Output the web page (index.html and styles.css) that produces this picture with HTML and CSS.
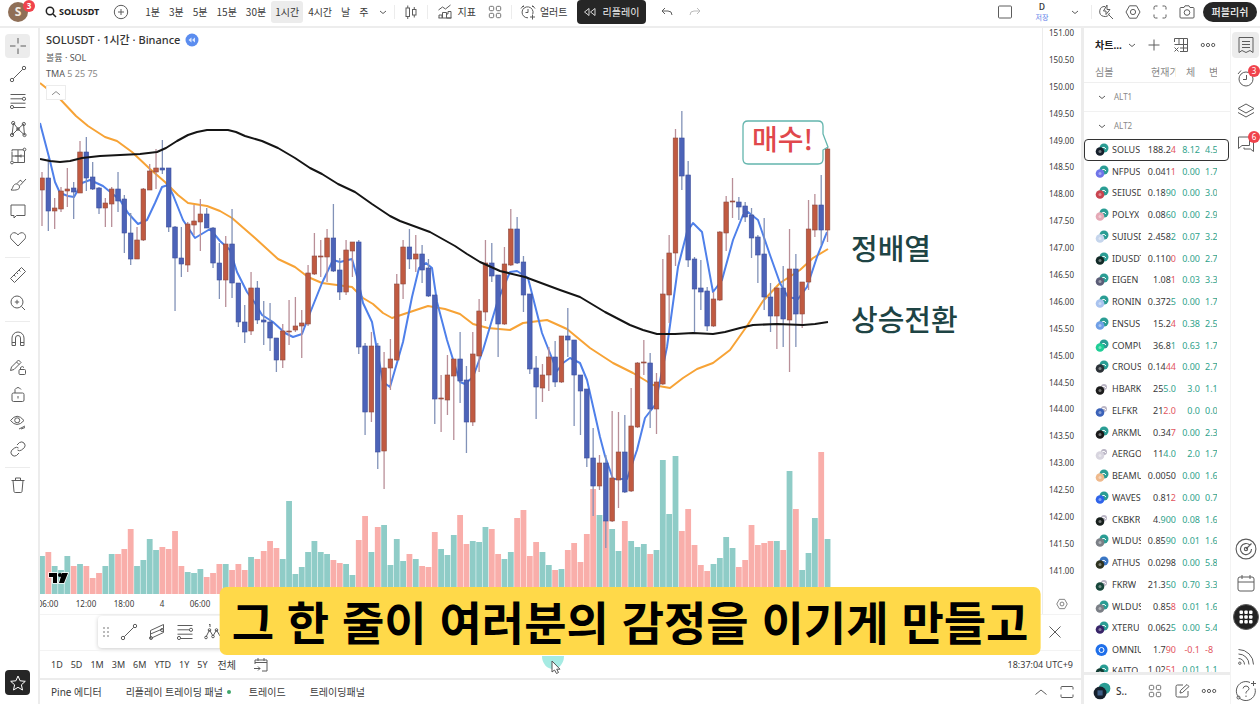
FILE: index.html
```html
<!DOCTYPE html>
<html lang="ko">
<head>
<meta charset="utf-8">
<title>SOLUSDT · 1시간 · Binance</title>
<link rel="stylesheet" href="styles.css">
</head>
<body>
<svg class="sprite" aria-hidden="true">
  <symbol id="chev" viewBox="0 0 10 10"><path d="M2 4l3 2.5L8 4"/></symbol>
  <symbol id="chev-up" viewBox="0 0 14 14"><path d="M1.500 9.500L7 5l5.500 4.500"/></symbol>
  <symbol id="search" viewBox="0 0 12 12"><circle cx="5" cy="5" r="3.700"/><path d="M8 8l3 3"/></symbol>
  <symbol id="plus-circle" viewBox="0 0 16 16"><circle cx="8" cy="8" r="6.700"/><path d="M8 5v6M5 8h6"/></symbol>
  <symbol id="candles" viewBox="0 0 14 16"><rect x="2" y="4" width="3.500" height="8.500"/><path d="M3.750 1.500V4M3.750 12.500V15M10.250 3v2.500M10.250 11v2.500"/><rect x="8.500" y="5.500" width="3.500" height="5.500"/></symbol>
  <symbol id="indicator" viewBox="0 0 16 16"><path d="M1.500 6l4-3 3 2 5-4M2 14v-3h3v3M5.500 14V8.500h4V14M9.500 14v-4h1.500V7.500h3V14zM1.500 14h13"/></symbol>
  <symbol id="grid4" viewBox="0 0 16 16"><rect x="1.500" y="1.500" width="5" height="5" rx="1.500"/><rect x="9.500" y="1.500" width="5" height="5" rx="1.500"/><rect x="1.500" y="9.500" width="5" height="5" rx="1.500"/><rect x="9.500" y="9.500" width="5" height="5" rx="1.500"/></symbol>
  <symbol id="alarm-plus" viewBox="0 0 16 16"><path d="M12.800 10A5.500 5.500 0 1 0 8 13.800M8 5v3.500H5.500M1 4.500L3.500 1.500M12.500 1.500L15 4.500M2 2.500h2M12 2.500h2M12.500 10.500v5M10 13h5"/></symbol>
  <symbol id="rewind" viewBox="0 0 14 12"><path d="M6 2.500v7L1.500 6zM12 2.500v7L7.500 6z"/></symbol>
  <symbol id="undo" viewBox="0 0 14 12"><path d="M5 2L2 5l3 3M2 5h6q4 0 4 4"/></symbol>
  <symbol id="redo" viewBox="0 0 14 12"><path d="M9 2l3 3-3 3M12 5H6Q2 5 2 9"/></symbol>
  <symbol id="square" viewBox="0 0 16 16"><rect x="1.500" y="2" width="13" height="12" rx="1"/></symbol>
  <symbol id="quick" viewBox="0 0 16 16"><path d="M7 2.500A5 5 0 1 0 11.500 9M10.500 10.500L15 15M9 1L5.500 7H8v3.500L12 5.500H9z"/></symbol>
  <symbol id="hex" viewBox="0 0 16 16"><path d="M4.500 1.800h7L15 8l-3.500 6.200h-7L1 8z"/><circle cx="8" cy="8" r="2.600"/></symbol>
  <symbol id="full" viewBox="0 0 16 16"><path d="M2 5.500V3.500q0-1.500 1.500-1.500h2M10.500 2h2Q14 2 14 3.500v2M14 10.500v2q0 1.500-1.500 1.500h-2M5.500 14h-2Q2 14 2 12.500v-2"/></symbol>
  <symbol id="maximize" viewBox="0 0 14 14"><path d="M1 4.500V2.500q0-1 1-1h10q1 0 1 1v2M1 9.500v2q0 1 1 1h10q1 0 1-1v-2"/></symbol>
  <symbol id="camera" viewBox="0 0 16 16"><path d="M2 3.500h3L6 1.800h4l1 1.700h3q1 0 1 1V13q0 1-1 1H2q-1 0-1-1V4.500q0-1 1-1z"/><circle cx="8" cy="8.500" r="2.800"/></symbol>
  <symbol id="cross" viewBox="0 0 18 18"><path d="M9 1v5.500M9 11.500V17M1 9h5.500M11.500 9H17"/></symbol>
  <symbol id="trend" viewBox="0 0 18 18"><circle cx="3" cy="15" r="1.700"/><circle cx="15" cy="3" r="1.700"/><path d="M4.300 13.700L13.700 4.300"/></symbol>
  <symbol id="fib" viewBox="0 0 18 18"><path d="M1.500 2.500h15M1.500 6.800h12M1.500 11.200h15M4.500 15.500h12"/><circle cx="15" cy="6.800" r="1.600"/><circle cx="3" cy="15" r="1.600"/></symbol>
  <symbol id="pattern" viewBox="0 0 18 18"><path d="M3 15L4.500 3l4.500 6 5.500-5L15.500 15 9 9z"/><circle cx="4.200" cy="3" r="1.600"/><circle cx="14.800" cy="4" r="1.600"/><circle cx="3" cy="15" r="1.600"/><circle cx="15.500" cy="15" r="1.600"/><circle cx="9" cy="9" r="1.300"/></symbol>
  <symbol id="forecast" viewBox="0 0 18 18"><path d="M3 4.500V2.800h11.500M15.500 4v11.500H4.500M3 5v8.500M3 9h12.500M9 3v12.500M6 9h6"/><circle cx="15.500" cy="2.500" r="1.400"/><circle cx="3" cy="15.500" r="1.400"/><path d="M12 7.500v3"/></symbol>
  <symbol id="brush" viewBox="0 0 18 18"><path d="M2 15c2-1.500 1.500-4 3.500-5.500s5 0 5 2.500-3 3.500-8.500 3zM8 8.500l3.500-3.500M11 10.500l6-6.500M11 5l2.500 2"/></symbol>
  <symbol id="note" viewBox="0 0 18 18"><path d="M2 3h14v10.500H7.500L5 16v-2.500H2z"/></symbol>
  <symbol id="heart" viewBox="0 0 18 18"><path d="M9 16L2.200 9C-.5 5.500 4.500-.5 9 4.800 13.500-.5 18.500 5.500 15.800 9z"/></symbol>
  <symbol id="ruler" viewBox="0 0 18 18"><path d="M1.500 12.500l11-11 4 4-11 11zM10 4l1.500 1.500M7.500 6.500L9 8M5 9l1.500 1.500"/></symbol>
  <symbol id="zoomin" viewBox="0 0 18 18"><circle cx="8" cy="8" r="6"/><path d="M12.500 12.500L16 16M8 5.800v4.400M5.800 8h4.400"/></symbol>
  <symbol id="magnet" viewBox="0 0 18 18"><path d="M3 15.500V8a6 6 0 0 1 12 0v7.500h-3.500V8a2.500 2.500 0 0 0-5 0v7.500zM3 12.500h3.500M11.500 12.500H15"/></symbol>
  <symbol id="pen-lock" viewBox="0 0 18 18"><path d="M1.500 12.500l1-3.500L9.500 2l2.500 2.500-7 7zM7.500 4L10 6.500"/><rect x="10" y="11.500" width="6.500" height="5" rx="1"/><path d="M11.500 11.500V9.500q1.800-2 3.500 0"/></symbol>
  <symbol id="lock" viewBox="0 0 18 18"><rect x="3" y="8" width="12" height="8.500" rx="1.500"/><path d="M6 8V4.500Q9 .5 12 4.500M9 11v2.500"/></symbol>
  <symbol id="eye" viewBox="0 0 18 18"><path d="M1.500 7.500Q8-1 15 7.500 8 15.500 1.500 7.500z"/><circle cx="8.200" cy="7.300" r="2.500"/><path d="M10 16l6-3M12 16l4-1.500"/></symbol>
  <symbol id="link" viewBox="0 0 18 18"><path d="M8 5l2.500-2.500q2.500-1.500 4.500.5t.5 4.500L12.500 10q-2 1.500-4 0M10 13l-2.500 2.500q-2.500 1.500-4.500-.5t-.5-4.500L5.500 8q2-1.500 4 0"/></symbol>
  <symbol id="trash" viewBox="0 0 18 18"><path d="M2.500 4.500h13M6.500 4V2h5v2M4 4.500l1 11q.2 1 1.200 1h5.600q1 0 1.200-1l1-11"/></symbol>
  <symbol id="star" viewBox="0 0 18 18"><path d="M9 2l2.100 4.800 5.200.5-3.900 3.500 1.100 5.200L9 13.300 4.500 16l1.100-5.200L1.700 7.300l5.200-.5z"/></symbol>
  <symbol id="channel" viewBox="0 0 18 18"><path d="M2.500 7.500L15.500 1.500v4L2.500 11zM2.500 11v4.500l13-6v-4"/><circle cx="3" cy="15" r="1.500"/><circle cx="14" cy="7" r="1.500"/></symbol>
  <symbol id="wave" viewBox="0 0 18 18"><path d="M2 14l3.500-7L9 13l3.500-6L16 13M6 1v3M5 1.500h1"/><circle cx="2" cy="14.500" r="1.300"/><circle cx="5.500" cy="7" r="1.300"/><circle cx="9" cy="13.500" r="1.300"/><circle cx="12.500" cy="7" r="1.300"/></symbol>
  <symbol id="goto" viewBox="0 0 16 16"><path d="M2 7V3h12v11H9M2 5.500h12M5 1v3M11 1v3M1 11.500h6M5 9.500l2 2-2 2"/></symbol>
  <symbol id="close" viewBox="0 0 14 14"><path d="M1.500 1.500l11 11M12.500 1.500l-11 11"/></symbol>
  <symbol id="plus" viewBox="0 0 14 14"><path d="M7 1.500v11M1.500 7h11"/></symbol>
  <symbol id="sheet" viewBox="0 0 16 16"><path d="M1.500 5V1.500h13v13H7M1.500 7.500h13M6 1.500v6M10.500 1.500v13M7 11h7.500M1.500 10.500l4 4M5.500 10.500l-4 4"/></symbol>
  <symbol id="dots" viewBox="0 0 16 16"><circle cx="2.800" cy="8" r="1.600"/><circle cx="8" cy="8" r="1.600"/><circle cx="13.200" cy="8" r="1.600"/></symbol>
  <symbol id="bookmark" viewBox="0 0 18 18"><path d="M2 1.500h14V16.500l-3-2-4 2-4-2-3 2zM5 5.500h8M5 8.500h8M5 11.500h8"/></symbol>
  <symbol id="alarm" viewBox="0 0 18 18"><circle cx="9" cy="10" r="7"/><path d="M9.500 6v4.500H6M1 5l3-3.500"/></symbol>
  <symbol id="layers" viewBox="0 0 18 18"><path d="M9 2l8 4.500L9 11 1 6.500zM1 10.500L9 15l8-4.500"/></symbol>
  <symbol id="chat" viewBox="0 0 18 18"><path d="M1.500 2h11v8.500H5L1.500 13.500zM14.500 6h2v10.500L13.500 14H7v-1.500"/></symbol>
  <symbol id="target" viewBox="0 0 20 20"><circle cx="10" cy="10" r="9"/><path d="M13.500 6.500a5 5 0 1 0 1.500 3.500M10 10l5-5"/><circle cx="10" cy="10" r="1.500"/></symbol>
  <symbol id="calendar" viewBox="0 0 18 18"><rect x="1" y="3" width="16" height="14" rx="2"/><path d="M1 8h16M5 1v4M13 1v4"/></symbol>
  <symbol id="apps" viewBox="0 0 26 26"><circle cx="13" cy="13" r="12.500" fill="#222"/><g fill="#fff" stroke="none"><rect x="6.500" y="6.500" width="3.500" height="3.500" rx="1"/><rect x="11.300" y="6.500" width="3.500" height="3.500" rx="1"/><rect x="16" y="6.500" width="3.500" height="3.500" rx="1"/><rect x="6.500" y="11.300" width="3.500" height="3.500" rx="1"/><rect x="11.300" y="11.300" width="3.500" height="3.500" rx="1"/><rect x="16" y="11.300" width="3.500" height="3.500" rx="1"/><rect x="6.500" y="16" width="3.500" height="3.500" rx="1"/><rect x="11.300" y="16" width="3.500" height="3.500" rx="1"/><rect x="16" y="16" width="3.500" height="3.500" rx="1"/></g></symbol>
  <symbol id="rss" viewBox="0 0 18 18"><path d="M1.500 1.500a15 15 0 0 1 15 15M1.500 6a10.500 10.500 0 0 1 10.500 10.500M1.500 10.500a6 6 0 0 1 6 6"/><circle cx="2.800" cy="15.200" r="1.200"/></symbol>
  <symbol id="help" viewBox="0 0 22 22"><path d="M15 2.500a9.500 9.500 0 1 0 5 6M8 8.500q.5-2.500 3-2.500t3 2.500q0 1.500-1.800 2.500T11 13.500M11 15.500v1.500M18.500 1v5M16 3.500h5"/><circle cx="3.500" cy="17.500" r="1.500"/></symbol>
  <symbol id="edit" viewBox="0 0 16 16"><path d="M9 2H3.500Q2 2 2 3.500v9Q2 14 3.500 14h9q1.500 0 1.500-1.500V8M6 10l.5-2.500 6.500-6 2 2-6.500 6z"/></symbol>
</svg>

<header class="topbar">
  <button class="avatar" aria-label="프로필">S<span class="badge avatar-badge">3</span></button>
  <button class="symbol"><svg class="i12 bold"><use href="#search"/></svg>SOLUSDT</button>
  <button class="icon add-symbol" aria-label="심볼 추가"><svg class="i16"><use href="#plus-circle"/></svg></button>
  <nav class="intervals">
    <button>1분</button><button>3분</button><button>5분</button><button>15분</button><button>30분</button><button class="on">1시간</button><button>4시간</button><button>날</button><button>주</button>
  </nav>
  <button class="icon iv-more" aria-label="더 보기"><svg class="i10"><use href="#chev"/></svg></button>
  <span class="vsep"></span>
  <button class="icon w32" aria-label="차트 종류"><svg class="i14t"><use href="#candles"/></svg></button>
  <span class="vsep"></span>
  <button class="labelled"><svg class="i16"><use href="#indicator"/></svg>지표</button>
  <button class="icon w32" aria-label="템플릿"><svg class="i14"><use href="#grid4"/></svg></button>
  <span class="vsep"></span>
  <button class="labelled alert"><svg class="i16"><use href="#alarm-plus"/></svg>얼러트</button>
  <button class="replay"><svg class="i14s"><use href="#rewind"/></svg>리플레이</button>
  <button class="icon undo" aria-label="실행 취소"><svg class="i14s"><use href="#undo"/></svg></button>
  <button class="icon faded" aria-label="다시 실행"><svg class="i14s"><use href="#redo"/></svg></button>
  <div class="top-right">
    <button class="icon w32" aria-label="레이아웃"><svg class="i16"><use href="#square"/></svg></button>
    <button class="save"><b>D</b><small>저장</small></button>
    <button class="icon save-more" aria-label="레이아웃 메뉴"><svg class="i10"><use href="#chev"/></svg></button>
    <span class="vsep"></span>
    <button class="icon w27" aria-label="빠른 검색"><svg class="i16"><use href="#quick"/></svg></button>
    <button class="icon w27" aria-label="설정"><svg class="i16"><use href="#hex"/></svg></button>
    <button class="icon w27" aria-label="전체 화면"><svg class="i16"><use href="#full"/></svg></button>
    <button class="icon w27" aria-label="스냅샷"><svg class="i16"><use href="#camera"/></svg></button>
    <button class="publish">퍼블리쉬</button>
  </div>
</header>

<div class="workspace">
  <aside class="tools">
    <div class="tool-group long">
      <button class="on" aria-label="십자선"><svg><use href="#cross"/></svg></button>
      <button aria-label="추세선"><svg><use href="#trend"/></svg></button>
      <button aria-label="피보나치"><svg><use href="#fib"/></svg></button>
      <button aria-label="패턴"><svg><use href="#pattern"/></svg></button>
      <button aria-label="예측"><svg><use href="#forecast"/></svg></button>
      <button aria-label="브러시"><svg><use href="#brush"/></svg></button>
      <button aria-label="텍스트"><svg><use href="#note"/></svg></button>
      <button aria-label="아이콘"><svg><use href="#heart"/></svg></button>
    </div>
    <div class="tool-group short">
      <button aria-label="자"><svg><use href="#ruler"/></svg></button>
      <button aria-label="확대"><svg><use href="#zoomin"/></svg></button>
    </div>
    <div class="tool-group mid">
      <button aria-label="자석"><svg><use href="#magnet"/></svg></button>
      <button aria-label="그리기 유지"><svg><use href="#pen-lock"/></svg></button>
      <button aria-label="잠금"><svg><use href="#lock"/></svg></button>
      <button aria-label="숨기기"><svg><use href="#eye"/></svg></button>
      <button aria-label="동기화"><svg><use href="#link"/></svg></button>
    </div>
    <div class="tool-group">
      <button aria-label="삭제"><svg><use href="#trash"/></svg></button>
    </div>
    <button class="fav" aria-label="즐겨찾기"><svg><use href="#star"/></svg></button>
  </aside>

  <main class="center">
    <section class="chart-row">
      <div class="stage">
        <svg class="plot" id="plot" viewBox="40 28 1002 566" preserveAspectRatio="xMinYMin meet" role="img" aria-label="SOLUSDT 캔들 차트"></svg>
        <div class="legend">
          <h1>SOLUSDT · 1시간 · Binance <svg class="replay-dot" viewBox="0 0 14 14"><circle cx="7" cy="7" r="6.500" fill="#5b8def"/><path d="M6.500 4.500v5L3.500 7zM10 4.500v5L7 7z" fill="#dce8ff"/></svg></h1>
          <p>볼륨 · SOL</p>
          <p>TMA <span>5 25 75</span></p>
          <button class="fold" aria-label="접기"><svg class="i10"><use href="#chev-up"/></svg></button>
        </div>
      </div>
      <ol class="prices" id="prices"></ol>
    </section>

    <section class="time-axis">
      <ol class="times"><li>06:00</li><li>12:00</li><li>18:00</li><li>4</li><li>06:00</li></ol>
      <button class="icon axis-gear" aria-label="축 설정"><svg class="i12"><use href="#hex"/></svg></button>
    </section>

    <section class="draw-row">
      <div class="favorites">
        <span class="grip"></span>
        <button aria-label="추세선"><svg><use href="#trend"/></svg></button>
        <button aria-label="채널"><svg><use href="#channel"/></svg></button>
        <button aria-label="피보나치"><svg><use href="#fib"/></svg></button>
        <button aria-label="엘리엇 파동"><svg><use href="#wave"/></svg></button>
      </div>
      <button class="icon close" aria-label="닫기"><svg class="i14"><use href="#close"/></svg></button>
    </section>

    <section class="range-row">
      <button>1D</button><button>5D</button><button>1M</button><button>3M</button><button>6M</button><button>YTD</button><button>1Y</button><button>5Y</button><button class="kr">전체</button>
      <button class="icon goto" aria-label="날짜로 이동"><svg class="i16"><use href="#goto"/></svg></button>
      <time>18:37:04 UTC+9</time>
    </section>

    <footer class="tabs">
      <button>Pine 에디터</button><button>리플레이 트레이딩 패널<i></i></button><button>트레이드</button><button>트레이딩패널</button>
      <div class="tab-right">
        <button class="icon" aria-label="펼치기"><svg class="i14"><use href="#chev-up"/></svg></button>
        <button class="icon" aria-label="최대화"><svg class="i14"><use href="#maximize"/></svg></button>
      </div>
    </footer>
  </main>

  <aside class="watch">
    <header class="watch-head">
      <button class="list-name">차트... <svg class="i10"><use href="#chev"/></svg></button>
      <button class="icon w27" aria-label="추가"><svg class="i14"><use href="#plus"/></svg></button>
      <button class="icon w27" aria-label="표 보기"><svg class="i16"><use href="#sheet"/></svg></button>
      <button class="icon w27" aria-label="메뉴"><svg class="i16"><use href="#dots"/></svg></button>
    </header>
    <table class="list">
      <thead><tr><th>심볼</th><th>현재가</th><th>체</th><th>변</th></tr></thead>
      <tbody class="groups">
        <tr><td><svg class="i10"><use href="#chev"/></svg>ALT1</td></tr>
        <tr><td><svg class="i10"><use href="#chev"/></svg>ALT2</td></tr>
      </tbody>
      <tbody class="rows" id="rows"></tbody>
    </table>
    <footer class="watch-foot">
      <span class="coin-name"><svg class="coin big" viewBox="0 0 14 14"><circle cx="9" cy="5" r="4.500" fill="#2a9d94"/><circle cx="5.500" cy="8.500" r="5" fill="#16202c"/><rect x="3.500" y="6.500" width="4" height="4" fill="#3f5f86"/></svg>S..</span>
      <button class="icon w27" aria-label="격자"><svg class="i14"><use href="#grid4"/></svg></button>
      <button class="icon w27" aria-label="메모"><svg class="i16"><use href="#edit"/></svg></button>
      <button class="icon w27" aria-label="메뉴"><svg class="i16"><use href="#dots"/></svg></button>
    </footer>
  </aside>

  <aside class="rail">
    <button class="on" aria-label="관심 목록"><svg><use href="#bookmark"/></svg></button>
    <button aria-label="얼러트"><svg><use href="#alarm"/></svg><span class="badge">3</span></button>
    <button aria-label="오브젝트 트리"><svg><use href="#layers"/></svg></button>
    <button aria-label="채팅"><svg><use href="#chat"/></svg><span class="badge">6</span></button>
    <div class="rail-bottom">
      <button aria-label="스크리너"><svg class="i22"><use href="#target"/></svg></button>
      <button aria-label="캘린더"><svg><use href="#calendar"/></svg></button>
      <button class="apps" aria-label="앱"><svg class="i26"><use href="#apps"/></svg></button>
      <button aria-label="뉴스"><svg><use href="#rss"/></svg></button>
      <button aria-label="도움말"><svg class="i22"><use href="#help"/></svg></button>
    </div>
  </aside>
</div>

<div class="pointer"><svg viewBox="0 0 22 18"><path d="M0 0h22a11 13 0 0 1-22 0z" fill="#a6ebe3"/><path d="M10 5v11l2.500-2 2 3.500 2-1-1.800-3.300H18z" fill="#fff" stroke="#555"/></svg></div>
<p class="caption">그 한 줄이 여러분의 감정을 이기게 만들고</p>
<script src="chart.js"></script>
</body>
</html>
```

FILE: styles.css
```css
* { box-sizing: border-box; }
body {
  margin: 0;
  height: 100vh;
  display: flex;
  flex-direction: column;
  overflow: hidden;
  position: relative;
  background: #fff;
  color: #3a3a3a;
  font: 10px/14px "Noto Sans", "Noto Sans CJK KR", sans-serif;
}
button { font: inherit; color: inherit; background: none; border: 0; padding: 0; margin: 0; display: flex; align-items: center; justify-content: center; flex: none; white-space: nowrap; }
ol { list-style: none; margin: 0; padding: 0; }
p, h1 { margin: 0; }
svg { fill: none; stroke: #5c5c5c; stroke-width: 1; flex: none; display: block; }
.sprite { position: absolute; width: 0; height: 0; }
.i10 { width: 10px; height: 10px; }
.i12 { width: 12px; height: 12px; }
.i14 { width: 14px; height: 14px; }
.i14s { width: 14px; height: 12px; }
.i14t { width: 14px; height: 16px; }
.i16 { width: 16px; height: 16px; }
.bold { stroke: #222; stroke-width: 1.5; }
.w27 { width: 27px; }
.w32 { width: 32px; }
.vsep { width: 1px; height: 14px; background: #ececec; flex: none; }
.badge {
  position: absolute; top: 0; right: -1px;
  width: 12px; height: 12px; border-radius: 6px;
  background: #f0434c; color: #fff; font-size: 8px; line-height: 12px; text-align: center;
}

/* top bar */
.topbar { display: flex; align-items: center; height: 28px; padding-bottom: 3px; border-bottom: 2px solid #ededed; flex: none; font-family: "Noto Sans CJK KR", sans-serif; }
.avatar { position: relative; width: 20px; height: 20px; margin-left: 8px; border-radius: 10px; background: #8f6f57; color: #f4ebe2; font: bold 12px/20px "Noto Sans", sans-serif; }
.avatar-badge { top: -2px; right: -7px; }
.symbol { margin-left: 17px; gap: 2px; font: bold 9px/14px "Noto Sans", sans-serif; color: #222; }
.add-symbol { margin-left: 14px; width: 16px; }
.intervals { display: flex; gap: 1px; margin-left: 12px; }
.intervals button { height: 22px; padding: 0 4px; border-radius: 3px; }
.intervals .on { background: #ececec; }
.iv-more { width: 22px; }
.labelled { gap: 4px; padding-left: 9px; }
.labelled + .icon { margin-left: 3px; }
.alert { padding-left: 8px; }
.replay { align-self: flex-start; height: 24px; width: 69px; margin-left: 9px; gap: 6px; border-radius: 4px; background: #262626; color: #f0f0f0; }
.replay svg { stroke: #d8d8d8; }
.undo { width: 42px; }
.faded svg { stroke: #bbb; }
.top-right { display: flex; align-items: center; margin-left: auto; padding-right: 3px; }
.save { flex-direction: column; width: 42px; line-height: 11px; }
.save b { font-size: 9px; font-weight: 500; }
.save small { font-size: 7px; color: #5b7be8; line-height: 11px; }
.save-more { width: 24px; }
.save-more + .vsep { margin: 0 0 0 4px; }
.publish { height: 20px; width: 54px; margin-left: 3px; border-radius: 10px; background: #262626; color: #f4f4f4; font-weight: 500; }

/* frame */
.workspace { flex: 1; min-height: 0; display: flex; }
.tools { width: 40px; flex: none; border-right: 2px solid #ececec; padding: 6px 8px 9px 5px; display: flex; flex-direction: column; }
.tool-group { display: flex; flex-direction: column; justify-content: space-between; }
.tool-group + .tool-group { border-top: 1px solid #ececec; margin-top: 6px; padding-top: 5px; }
.tool-group.long { height: 217px; }
.tool-group.short { height: 58px; }
.tool-group.mid { height: 140px; }
.tools button { width: 25px; height: 24px; border-radius: 4px; }
.tools svg, .favorites svg, .rail svg { width: 18px; height: 18px; }
.tools .on, .rail .on { background: #ececec; }
.tools .fav { margin-top: auto; height: 25px; background: #262626; }
.fav svg { stroke: #fff; }

.center { flex: 1; min-width: 0; display: flex; flex-direction: column; }
.chart-row { flex: 1; min-height: 0; display: flex; }
.stage { flex: 1; min-width: 0; position: relative; }
.plot { width: 100%; height: 100%; stroke: none; }
.plot text { font-family: "Noto Sans CJK KR", sans-serif; font-size: 29px; font-weight: 500; fill: #1e4444; }
.plot .buy { fill: #e0484c; font-size: 28px; }
.legend { position: absolute; top: 5px; left: 6px; color: #555; font-size: 9px; line-height: 16px; }
.legend h1 { display: flex; align-items: center; gap: 5px; font: 500 11px/14px "Noto Sans", "Noto Sans CJK KR", sans-serif; color: #333; margin-bottom: 3px; }
.legend span { color: #888; }
.replay-dot { width: 14px; height: 14px; stroke: none; }
.fold { width: 20px; height: 15px; margin-top: 3px; background: #fff; border: 1px solid #ececec; }
.prices { width: 39px; border-left: 1px solid #ececec; padding-bottom: 18px; display: flex; flex-direction: column; justify-content: space-between; flex: none; }
.prices li { padding-left: 6px; font-size: 8px; line-height: 10px; }
.time-axis { height: 20px; display: flex; align-items: center; flex: none; }
.times { flex: 1; display: flex; overflow: hidden; font-size: 8px; margin-left: -11px; clip-path: inset(0 0 0 11px); }
.times li { width: 38px; text-align: center; }
.axis-gear { width: 39px; border-left: 1px solid #ececec; height: 20px; }
.draw-row { height: 36px; display: flex; align-items: flex-start; justify-content: space-between; border-top: 1px solid #f3f3f3; flex: none; padding: 1px 19px 0 58px; }
.favorites { display: flex; align-items: center; height: 32px; width: 320px; padding-left: 4px; border-radius: 4px; box-shadow: 0 1px 4px #0003; }
.favorites button { width: 28px; }
.grip { width: 8px; height: 12px; margin-right: 5px; background: radial-gradient(circle, #bbb 1px, transparent 1px) 0 0 / 4px 4px; }
.close { height: 32px; }
.range-row { height: 28px; display: flex; align-items: center; gap: 8px; padding: 0 8px 0 11px; border-top: 1px solid #f3f3f3; font-size: 9px; flex: none; }
.range-row .kr { font-size: 10px; margin-left: 2px; }
.goto { margin-left: 9px; }
.range-row time { margin-left: auto; }
.tabs { height: 26px; display: flex; align-items: center; gap: 24px; padding: 0 7px 0 11px; border-top: 2px solid #ececec; flex: none; }
.tabs i { width: 4px; height: 4px; border-radius: 2px; background: #3fa66b; margin-left: 4px; }
.tabs button:nth-child(3) { margin-left: -6px; }
.tab-right { display: flex; gap: 12px; margin-left: auto; }
.tab-right button:nth-child(n) { margin: 0; }

/* watchlist */
.watch { width: 149px; border-left: 3px solid #ececec; display: flex; flex-direction: column; flex: none; }
.watch-head { height: 34px; display: flex; align-items: center; padding-left: 11px; flex: none; }
.list-name { width: 42px; justify-content: space-between; margin-right: 3px; color: #222; font-weight: 700; }
.list { flex: 1; min-height: 0; display: flex; flex-direction: column; border-collapse: collapse; font-size: 9px; line-height: 12px; }
.list td, .list th { padding: 0; overflow: hidden; white-space: nowrap; text-align: left; font-weight: 400; }
.list thead { display: block; height: 21px; border-bottom: 1px solid #efefef; flex: none; color: #888; font-size: 10px; line-height: 20px; }
.list thead tr, .rows tr { display: grid; grid-template-columns: 46px 30px 19px 12px; column-gap: 5px; padding-left: 11px; }
.list thead th:nth-child(2) { padding-left: 5px; }
.list thead th:nth-child(3) { padding-left: 5px; }
.list thead th:nth-child(4) { padding-left: 4px; }
.groups { display: block; flex: none; color: #888; font-size: 8px; }
.groups td { display: flex; align-items: center; gap: 7px; height: 28px; padding-left: 13px; }
.groups tr { display: block; }
.groups tr:first-child { border-bottom: 1px solid #f1f1f1; }
.groups tr:last-child { height: 27px; }
.rows { flex: 1; min-height: 0; display: flex; flex-direction: column; overflow: hidden; }
.rows tr { flex: 1 1 0; min-height: 0; align-items: center; margin-right: 1px; border-radius: 4px; }
.rows tr:first-child { outline: 1px solid #333; outline-offset: -1px; }
.rows tr:last-child { flex-grow: .5; align-items: start; overflow: hidden; }
.rows tr:last-child td { padding-top: 3px; }
.rows .name { display: flex; align-items: center; gap: 3px; }
.rows .name span { overflow: hidden; }
.rows .price { text-align: right; }
.rows .chg { text-align: right; }
.up { color: #2fa38c; }
.down { color: #e25560; }
.coin { width: 14px; height: 14px; stroke: none; }
.coin.big { width: 18px; height: 18px; }
.watch-foot { height: 32px; border-top: 3px solid #ececec; display: flex; align-items: center; padding: 3px 0 0 9px; flex: none; }
.coin-name { display: flex; align-items: center; gap: 5px; width: 48px; font-weight: 500; }

/* right rail */
.rail { width: 30px; border-left: 1px solid #f3f3f3; padding: 4px 1px 0; display: flex; flex-direction: column; align-items: center; gap: 7px; flex: none; }
.rail button { position: relative; width: 27px; height: 26px; border-radius: 4px; }
.rail .i22 { width: 22px; height: 22px; }
.rail .i26 { width: 26px; height: 26px; }
.rail-bottom { margin-top: auto; display: flex; flex-direction: column; gap: 8px; }
.rail-bottom .apps { margin-bottom: 6px; }

/* overlays */
.pointer { position: absolute; left: 542px; bottom: 30px; }
.pointer svg { width: 22px; height: 18px; stroke: none; }
.caption {
  position: absolute; left: 50%; bottom: 49px; transform: translateX(-50%);
  padding: 0 12px 2px; border-radius: 7px; background: #ffd949; color: #000; white-space: nowrap;
  font: 700 46px/66px "Noto Sans CJK KR", sans-serif;
}
```

FILE: chart.js
```js
// Candles: direction, high, open/close top, open/close bottom, low.
const candles = `r172,178,190,226 b158,178,211,231 r198,208,211,229 r187,191,209,212 r168,189,191,207 b182,188,192,219 r141,152,193,193 b137,152,178,191 b162,177,189,190 b187,188,208,214
r198,203,208,227 r187,189,204,227 b172,189,201,212 b195,199,233,253 b213,233,259,265 r227,240,259,259 r188,189,240,241 r164,171,190,190 r149,168,172,189 b140,168,170,174
b168,168,227,232 b226,227,258,311 b227,258,264,277 r222,224,265,272 r205,221,225,235 r199,214,222,251 b208,214,228,228 b227,228,263,268 b243,263,280,299 r236,244,280,307
b209,244,283,298 b283,283,322,327 b305,322,332,343 r272,288,331,335 b281,288,320,324 b301,320,322,345 b303,322,338,351 b338,338,360,372 r324,331,360,368 r300,331,332,345
r297,326,330,332 r310,323,326,358 r265,273,324,326 r233,256,274,275 r240,256,257,277 r229,238,257,282 b204,238,271,272 b258,270,292,300 r240,250,292,295 r242,242,251,277
b240,242,347,354 b343,346,412,435 r332,346,412,422 b343,346,452,469 r352,368,451,489 r339,359,368,390 r274,284,360,361 r240,247,284,299 b229,247,259,269 r235,254,259,272
b245,254,270,283 b259,268,296,297 b295,295,399,424 r375,398,399,432 r355,375,400,415 r359,359,376,440 b332,359,381,403 b366,380,422,453 r332,354,422,426 r299,311,356,372
r240,263,312,321 b243,263,276,282 b275,275,324,357 r247,264,324,325 r209,229,265,266 b217,229,263,264 b256,262,295,312 b294,294,369,374 b356,368,387,419 r364,375,388,402
r347,357,375,391 b341,357,382,387 r336,336,382,383 b308,336,340,357 b340,340,375,426 b375,375,391,435 b389,389,458,467 b428,458,486,516 r455,463,486,490 b455,463,521,548
r411,478,521,522 r412,452,480,508 b415,452,492,493 r388,426,491,492 r362,363,427,428 r340,362,363,375 b353,363,409,428 r373,382,409,434 r259,294,384,385 r235,253,295,323
r129,138,253,266 b111,138,176,190 b161,175,260,267 b257,259,289,332 b260,288,292,310 b287,291,326,331 r292,299,326,327 r231,232,300,301 r196,202,233,251 r178,201,202,218
b197,202,207,220 b202,206,217,222 b208,215,238,258 b235,237,255,283 b218,254,297,310 b283,297,316,332 r287,288,316,349 b266,288,319,347 r229,269,320,372 b254,269,314,347
r282,282,314,328 r200,229,282,290 r194,205,230,237 b175,205,230,245 r147,149,230,242`.split(/\s+/);

// Volume: direction and top of each bar.
const volume = `g556 r552 g566 g570 g556 r566 g564 r566 r578 r573 g566 g554 r554 r549 r529 g566 g560 g539 g550 r547 r549 r531 r566 g572 g573 g569 r577 r573 r564 g564
r570 r564 r570 g557 r559 r551 r541 r548 g559 g501 g574 g567 g552 g541 g552 g554 r560 r563 g564 g575 r540 r516 g552 r527 g525 g565 g539 g561 r554 g559
r566 r567 r532 g549 g555 g535 r515 r544 g541 g542 g527 r529 r554 g559 g552 r518 r510 r556 r542 g552 g565 r570 g569 r550 r543 r562 r534 r489 g515 r521
g529 g551 r521 g541 g547 g544 r554 g550 g460 g514 g456 r531 r509 r545 r565 r571 g564 g558 g537 g548 r567 r560 r525 r545 r543 r541 g541 r550 g471 r509
g570 g553 g518 r452 g539`.split(/\s+/);

const slow = "40,159 50,161 60,162 70,161 82,158 100,156 120,155 140,154 157,152 166,148 177,141 188,135 197,132 207,130 228,130 236,132 245,136 262,141 278,148 295,158 310,168 322,174 338,184 355,192 372,204 390,216 400,221 430,232 455,246 467,254 480,262 500,271 525,277 560,290 580,297 605,312 630,325 643,330 657,334 675,334 693,333 713,334 725,332 740,328 753,325 777,324 803,325 815,324 828,322";
const mid = "40,83 45,87 60,99 76,116 88,126 105,137 117,141 132,152 150,169 165,182 178,195 188,203 207,206 220,211 232,218 255,238 278,259 295,267 308,277 322,283 337,285 352,287 363,298 373,304 383,313 392,318 407,313 428,306 445,309 460,314 473,324 488,328 510,330 523,323 547,320 567,329 590,348 613,363 633,373 653,385 670,388 683,378 697,369 713,363 730,350 747,326 763,301 780,283 800,270 813,258 828,249";
const fast = "40,123 50,161 55,182 60,193 68,196 74,197 82,183 90,180 103,186 120,200 128,213 138,224 147,220 155,203 162,187 168,185 173,195 183,220 195,238 210,229 220,241 230,250 237,272 247,292 255,303 262,315 273,322 285,333 293,337 302,334 310,313 322,283 333,260 340,262 352,259 358,280 363,303 372,322 377,350 383,382 390,387 403,342 412,297 419,268 426,263 432,268 437,302 447,340 460,382 465,384 473,377 483,350 498,300 510,272 517,271 528,278 542,333 557,371 563,363 570,358 580,363 587,380 600,437 605,456 613,479 627,479 637,450 645,418 655,405 667,347 678,267 687,232 693,223 702,232 713,292 722,280 733,240 743,215 748,212 758,220 770,255 780,283 788,297 798,299 807,287 817,257 827,232";

const x = i => 42 + i * 6.335;
let out = "";
volume.forEach((v, i) => {
  const top = +v.slice(1);
  out += `<rect x="${x(i) - 2.9}" y="${top}" width="5.8" height="${594 - top}" fill="${v[0] === "g" ? "#8fccc7" : "#f9aeaa"}"/>`;
});
const line = (pts, color, w) => `<polyline points="${pts}" fill="none" stroke="${color}" stroke-width="${w}" stroke-linejoin="round"/>`;
out += line(mid, "#f7a336", 2) + line(fast, "#4f80ea", 2);
candles.forEach((c, i) => {
  const [hi, top, bottom, lo] = c.slice(1).split(",").map(Number);
  const red = c[0] === "r";
  out += `<path d="M${x(i)} ${hi}V${lo}" stroke="${red ? "#b98f98" : "#8292b8"}" stroke-width="1.3"/>`;
  out += `<rect x="${x(i) - 2.3}" y="${top}" width="4.6" height="${Math.max(1, bottom - top)}" fill="${red ? "#c05a41" : "#4c63b8"}" stroke="${red ? "#8d4a40" : "#3d4f9c"}" stroke-width=".6"/>`;
});
out += line(slow, "#151515", 2);
out += `<path d="M748 121H818Q823 121 823 126V134L828 147L823 150V159Q823 164 818 164H748Q743 164 743 159V126Q743 121 748 121Z" fill="#fff" stroke="#63b5ad" stroke-width="1.3"/>
<text class="buy" x="752" y="150">매수!</text><text x="851" y="260">정배열</text><text x="851" y="331">상승전환</text>
<path d="M49 573h8v10h-4v-6h-4zM62 573h6l-4 10h-5z" fill="#000" stroke="#fff" stroke-width="1.5" paint-order="stroke"/><circle cx="60" cy="575" r="2" fill="#000"/>`;
document.getElementById("plot").innerHTML = out;

let prices = "";
for (let p = 151; p >= 141; p -= 0.5) prices += `<li>${p.toFixed(2)}</li>`;
document.getElementById("prices").innerHTML = prices;

// name, steady digits, changed digits, direction, change, percent, coin colour, exchange colour
const T = "#2a9d94", K = "#b9b4c4";
const list = [
  ["SOLUS", "188.2", "4", "down", "8.12", "4.5", "#16202c", T],
  ["NFPUS", "0.041", "1", "down", "0.00", "1.7", "#6f74e8", T],
  ["SEIUSD", "0.18", "90", "up", "0.00", "3.0", "#c9444f", T],
  ["POLYX", "0.08", "60", "up", "0.00", "2.9", "#e5a9b6", T],
  ["SUIUSD", "2.458", "2", "up", "0.07", "3.2", "#c5d5ec", T],
  ["IDUSDT", "0.110", "0", "down", "0.00", "2.7", "#122a27", T],
  ["EIGEN", "1.08", "1", "down", "0.03", "3.3", "#5b5d77", T],
  ["RONIN", "0.372", "5", "up", "0.00", "1.7", "#a9c3ef", T],
  ["ENSUS", "15.2", "4", "down", "0.38", "2.5", "#6f9fe6", T],
  ["COMPU", "36.8", "1", "up", "0.63", "1.7", "#1fce96", T],
  ["CROUS", "0.14", "44", "down", "0.00", "2.7", "#2c3238", T],
  ["HBARK", "25", "5.0", "up", "3.0", "1.1", "#1c1c1c", K],
  ["ELFKR", "21", "2.0", "down", "0.0", "0.0", "#3b62b8", K],
  ["ARKMU", "0.34", "7", "down", "0.00", "2.3", "#1a1a1a", T],
  ["AERGO", "11", "4.0", "up", "2.0", "1.7", "#d8d5df", K],
  ["BEAMU", "0.0050", "", "up", "0.00", "1.6", "#efb98c", T],
  ["WAVES", "0.81", "2", "down", "0.00", "0.7", "#2f63ea", T],
  ["CKBKR", "4.", "900", "up", "0.08", "1.6", "#18201d", K],
  ["WLDUS", "0.85", "90", "up", "0.01", "1.6", "#7b7f86", T],
  ["ATHUS", "0.0298", "", "up", "0.00", "5.8", "#2f3320", "#3a76c4"],
  ["FKRW", "21.3", "50", "up", "0.70", "3.3", "#17473b", K],
  ["WLDUS", "0.85", "8", "down", "0.01", "1.6", "#7b7f86", T],
  ["XTERU", "0.062", "5", "up", "0.00", "5.4", "#372468", T],
  ["OMNIU", "1.7", "90", "down", "-0.1", "-8", "#1f6fea", "#1f6fea"],
  ["KAITO", "1.02", "51", "down", "0.01", "1.1", "#123c33", T]
];
document.getElementById("rows").innerHTML = list.map(([n, a, b, d, chg, pct, coin, ex]) => {
  const dir = chg[0] === "-" ? "down" : "up";
  const icon = coin === ex
    ? `<circle cx="6.500" cy="7" r="6" fill="${coin}"/><circle cx="6.500" cy="7" r="2.500" fill="none" stroke="#fff"/>`
    : `<circle cx="9" cy="5" r="${ex === K ? 3 : 4.5}" fill="${ex}"/><path d="M7 5q2-2 4 1" stroke="#fff"/><circle cx="5" cy="8.500" r="4.300" fill="${coin}"/><circle cx="5" cy="8.500" r="1.500" fill="#fff" opacity=".4"/>`;
  return `<tr><td class="name"><svg class="coin" viewBox="0 0 14 14">${icon}</svg><span>${n}</span></td><td class="price">${a}<span class="${d}">${b}</span></td><td class="chg ${dir}">${chg}</td><td class="${dir}">${pct}</td></tr>`;
}).join("");
```
